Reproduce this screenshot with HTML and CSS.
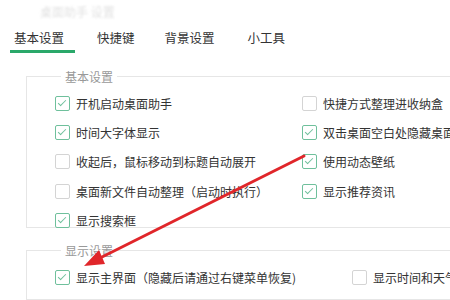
FILE: index.html
```html
<!DOCTYPE html>
<html lang="zh">
<head>
    <meta charset="UTF-8">
    <title>设置</title>
    <link rel="stylesheet" href="styles.css">
</head>
<body>
    <div class="window">
        <div class="title">桌面助手 设置</div>

        <div class="tabs">
            <div class="tab active">基本设置</div>
            <div class="tab">快捷键</div>
            <div class="tab">背景设置</div>
            <div class="tab">小工具</div>
        </div>

        <fieldset class="group basic">
            <legend>基本设置</legend>
            <div class="grid">
                <label class="item"><span class="box checked"></span>开机启动桌面助手</label>
                <label class="item"><span class="box"></span>快捷方式整理进收纳盒</label>
                <label class="item"><span class="box checked"></span>时间大字体显示</label>
                <label class="item"><span class="box checked"></span>双击桌面空白处隐藏桌面图标</label>
                <label class="item"><span class="box"></span>收起后，鼠标移动到标题自动展开</label>
                <label class="item"><span class="box checked"></span>使用动态壁纸</label>
                <label class="item"><span class="box"></span>桌面新文件自动整理（启动时执行）</label>
                <label class="item"><span class="box checked"></span>显示推荐资讯</label>
                <label class="item"><span class="box checked"></span>显示搜索框</label>
            </div>
        </fieldset>

        <fieldset class="group display">
            <legend>显示设置</legend>
            <div class="row">
                <label class="item wide"><span class="box checked"></span>显示主界面（隐藏后请通过右键菜单恢复)</label>
                <label class="item"><span class="box"></span>显示时间和天气</label>
            </div>
        </fieldset>

        <svg class="arrow" width="450" height="300" viewBox="0 0 450 300">
            <line x1="304" y1="156" x2="100" y2="258" stroke="#e0262a" stroke-width="3" stroke-linecap="round"/>
            <polygon points="84,266 99,250 105,264" fill="#e0262a"/>
        </svg>
    </div>
</body>
</html>
```

FILE: styles.css
```css
body {
    margin: 0;
    background: #fff;
    font-family: "Noto Sans CJK SC", "Noto Sans", sans-serif;
    color: #333;
    overflow: hidden;
}
.window {
    position: relative;
    width: 450px;
    height: 300px;
    overflow: hidden;
}
.title {
    height: 24px;
    padding-left: 40px;
    font-size: 12px;
    line-height: 24px;
    color: #e2e2e2;
    filter: blur(1.2px);
}
.tabs {
    display: flex;
    padding-left: 10px;
    height: 29px;
}
.tab {
    padding: 4px 4px 0;
    font-size: 12.5px;
    line-height: 20px;
    color: #333;
    white-space: nowrap;
    border-bottom: 3px solid transparent;
}
.tab + .tab {
    margin-left: 22px;
}
.tab.active {
    border-bottom-color: #2aa86a;
    width: 65px;
    box-sizing: border-box;
}
.tab:nth-child(2) {
    margin-left: 18px;
}
.tab:nth-child(4) {
    margin-left: 25px;
}
.group {
    margin: 0 0 0 26px;
    width: 480px;
    border: 1px solid #e6e6e6;
    padding: 4px 0 8px 28px;
    min-width: 0;
}
.group.basic {
    margin-top: 15px;
    height: 160px;
    box-sizing: border-box;
}
.group.display {
    margin-top: 14px;
    border-right: none;
}
legend {
    margin-left: 6px;
    padding: 0 4px;
    font-size: 12px;
    color: #999;
}
.grid {
    display: grid;
    grid-template-columns: 247px 1fr;
    grid-auto-rows: 29.2px;
}
.row {
    display: flex;
    height: 28px;
}
.item {
    display: flex;
    align-items: center;
    font-size: 12px;
    white-space: nowrap;
    color: #333;
}
.item.wide {
    width: 297px;
}
.box {
    position: relative;
    width: 13px;
    height: 13px;
    border: 1px solid #d4d4d4;
    border-radius: 2px;
    margin-right: 6px;
    flex-shrink: 0;
}
.box.checked {
    border-color: #6fc09c;
}
.box.checked::after {
    content: "";
    position: absolute;
    left: 4px;
    top: 1px;
    width: 3px;
    height: 7px;
    border: solid #6fc09c;
    border-width: 0 1.5px 1.5px 0;
    transform: rotate(45deg);
}
.arrow {
    position: absolute;
    left: 0;
    top: 0;
    pointer-events: none;
}
```
